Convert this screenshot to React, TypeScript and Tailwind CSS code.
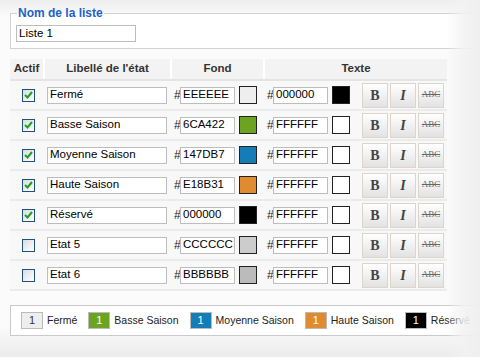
import React from "react";

type Etat = {
  label: string;
  actif: boolean;
  fond: string;
  texte: string;
};

const etats: Etat[] = [
  { label: "Fermé", actif: true, fond: "EEEEEE", texte: "000000" },
  { label: "Basse Saison", actif: true, fond: "6CA422", texte: "FFFFFF" },
  { label: "Moyenne Saison", actif: true, fond: "147DB7", texte: "FFFFFF" },
  { label: "Haute Saison", actif: true, fond: "E18B31", texte: "FFFFFF" },
  { label: "Réservé", actif: true, fond: "000000", texte: "FFFFFF" },
  { label: "Etat 5", actif: false, fond: "CCCCCC", texte: "FFFFFF" },
  { label: "Etat 6", actif: false, fond: "BBBBBB", texte: "FFFFFF" },
];

function Check({ on }: { on: boolean }) {
  return (
    <span className="flex h-[13px] w-[13px] items-center justify-center border border-[#1c5180] bg-gradient-to-br from-[#dcdcdc] to-white">
      {on && (
        <svg width="9" height="8" viewBox="0 0 9 8">
          <path d="M1 4 L3.5 6.5 L8 1" fill="none" stroke="#21a121" strokeWidth="2" />
        </svg>
      )}
    </span>
  );
}

function Field({ value, w }: { value: string; w: string }) {
  return (
    <div className={`${w} flex h-[17px] items-center overflow-hidden border border-[#bdbdbd] bg-white pl-[2px] text-[11.5px] leading-none text-black`}>
      {value}
    </div>
  );
}

function Swatch({ color }: { color: string }) {
  return (
    <span
      className="block h-[18px] w-[18px] border border-[#222]"
      style={{ backgroundColor: `#${color}` }}
    />
  );
}

function StyleButton({ children }: { children: React.ReactNode }) {
  return (
    <button className="flex h-[25px] w-[26px] items-center justify-center border border-[#dcd6ca] bg-gradient-to-b from-white via-[#f1f1f1] to-[#e2e2e2]">
      {children}
    </button>
  );
}

export default function App() {
  return (
    <div
      className="relative h-[357px] w-[480px] overflow-hidden bg-[linear-gradient(to_bottom,#eeeeee_0px,#fbfbfb_18px,#fbfbfb_325px,#ebebeb_357px)] text-[#222]"
      style={{ fontFamily: '"Liberation Sans", Arial, sans-serif' }}
    >
      <fieldset className="ml-[10px] mt-[6px] border border-r-0 border-[#d2d2d2] bg-white pb-[6px] pl-[5px]">
        <legend className="ml-[1px] px-[1px] text-[12px] font-bold leading-[14px] text-[#1d62c9]">
          Nom de la liste
        </legend>
        <div className="mt-[5px]">
          <Field value="Liste 1" w="w-[120px]" />
        </div>
      </fieldset>

      <div className="ml-[10px] mt-[10px] w-[437px]">
        <div className="grid h-[22px] grid-cols-[35px_127px_93px_182px] border-b-2 border-[#e4e4e4] bg-[#f3f3f3] text-[11.5px] font-bold text-[#333]">
          <div className="flex items-center justify-center border-r-2 border-white">Actif</div>
          <div className="flex items-center justify-center border-r-2 border-white">Libellé de l'état</div>
          <div className="flex items-center justify-center border-r-2 border-white">Fond</div>
          <div className="flex items-center justify-center">Texte</div>
        </div>

        {etats.map((e) => (
          <div
            key={e.label}
            className="grid h-[30px] grid-cols-[35px_127px_93px_182px] items-center border-b-2 border-[#ebebeb] bg-[#f8f8f8]"
          >
            <div className="flex justify-center pl-[2px]">
              <Check on={e.actif} />
            </div>
            <div className="pl-[2px]">
              <Field value={e.label} w="w-[120px]" />
            </div>
            <div className="flex items-center pl-[2px]">
              <span className="w-[6px] text-[12px] leading-none">#</span>
              <Field value={e.fond} w="w-[55px]" />
              <span className="ml-[4px]">
                <Swatch color={e.fond} />
              </span>
            </div>
            <div className="flex items-center pl-[2px]">
              <span className="w-[6px] text-[12px] leading-none">#</span>
              <Field value={e.texte} w="w-[55px]" />
              <span className="ml-[4px]">
                <Swatch color={e.texte} />
              </span>
              <div className="ml-[12px] flex gap-[2px]">
                <StyleButton>
                  <span className="text-[14px] font-bold text-[#444]" style={{ fontFamily: '"Liberation Serif", serif' }}>
                    B
                  </span>
                </StyleButton>
                <StyleButton>
                  <span className="text-[14px] font-bold italic text-[#444]" style={{ fontFamily: '"Liberation Serif", serif' }}>
                    I
                  </span>
                </StyleButton>
                <StyleButton>
                  <span className="text-[9px] text-[#666] line-through" style={{ fontFamily: '"Liberation Serif", serif' }}>
                    ABC
                  </span>
                </StyleButton>
              </div>
            </div>
          </div>
        ))}
      </div>

      <div className="ml-[10px] mt-[14px] flex h-[31px] items-center gap-[11px] border border-r-0 border-[#cacaca] bg-white pl-[10px] text-[10.5px] whitespace-nowrap">
        {etats.slice(0, 5).map((e) => (
          <div key={e.label} className="flex items-center gap-[4px]">
            <span
              className={`flex h-[17px] w-[22px] items-center justify-center border border-[#bbb] text-[11px] ${e.texte === "000000" ? "text-[#333]" : "text-white"}`}
              style={{ backgroundColor: `#${e.fond}` }}
            >
              1
            </span>
            <span>{e.label}</span>
          </div>
        ))}
      </div>

      <div className="pointer-events-none absolute right-0 top-0 h-full w-[34px] bg-gradient-to-r from-[#f2f2f2]/0 via-[#f2f2f2]/85 to-[#efefef]" />
    </div>
  );
}
